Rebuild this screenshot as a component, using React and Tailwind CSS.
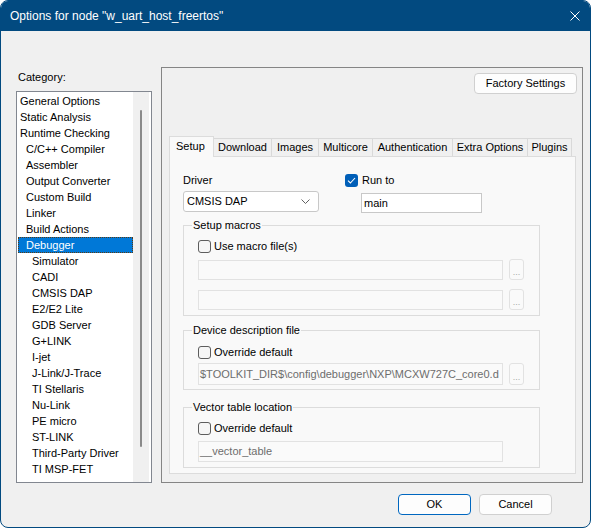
import React from "react";

const categories = [
  ["General Options", 0],
  ["Static Analysis", 0],
  ["Runtime Checking", 0],
  ["C/C++ Compiler", 1],
  ["Assembler", 1],
  ["Output Converter", 1],
  ["Custom Build", 1],
  ["Linker", 1],
  ["Build Actions", 1],
  ["Debugger", 1],
  ["Simulator", 2],
  ["CADI", 2],
  ["CMSIS DAP", 2],
  ["E2/E2 Lite", 2],
  ["GDB Server", 2],
  ["G+LINK", 2],
  ["I-jet", 2],
  ["J-Link/J-Trace", 2],
  ["TI Stellaris", 2],
  ["Nu-Link", 2],
  ["PE micro", 2],
  ["ST-LINK", 2],
  ["Third-Party Driver", 2],
  ["TI MSP-FET", 2],
];

const indent = ["pl-[1px]", "pl-[7px]", "pl-[13px]"];

const tabs = [
  ["Setup", "w-[45px]"],
  ["Download", "w-[58px]"],
  ["Images", "w-[47px]"],
  ["Multicore", "w-[54px]"],
  ["Authentication", "w-[80px]"],
  ["Extra Options", "w-[75px]"],
  ["Plugins", "w-[44px]"],
];

function Checkbox({ checked }) {
  if (checked) {
    return (
      <span className="w-[13px] h-[13px] rounded-[3px] bg-[#005fb8] flex items-center justify-center shrink-0">
        <svg width="9" height="7" viewBox="0 0 9 7">
          <path d="M1 3.6 L3.4 6 L8 1" fill="none" stroke="white" strokeWidth="1.1" />
        </svg>
      </span>
    );
  }
  return <span className="w-[13px] h-[13px] rounded-[3px] border border-[#5d5d5d] bg-[#f6f6f6] shrink-0" />;
}

function Field({ text, h = "h-[20px]" }) {
  return (
    <div className={`w-[305px] ${h} border border-[#e2e2e2] bg-[#fafafa] text-[#6d6d6d] flex items-center pl-[1px] overflow-hidden whitespace-nowrap`}>
      {text}
    </div>
  );
}

function Dots({ h = "h-[21px]" }) {
  return (
    <div className={`ml-[6px] w-[15px] ${h} rounded-[3px] border border-[#e2e2e2] bg-[#fafafa] text-[#a8a8a8] text-[9px] flex items-end justify-center pb-[2px] leading-none`}>
      ...
    </div>
  );
}

// group box: fieldset gives the legend cut into the top border
function Group({ label, children, className }) {
  return (
    <fieldset className={`ml-[13px] w-[357px] border border-[#dcdcdc] ${className}`}>
      <legend className="ml-[8px] px-[1px] leading-[16px]">{label}</legend>
      <div className="pl-[14px]">{children}</div>
    </fieldset>
  );
}

export default function App() {
  return (
    <div className="w-[591px] h-[528px] bg-white">
      <div className="w-[591px] h-[528px] flex flex-col rounded-[8px] overflow-hidden border border-[#024a80] bg-[#f0f0f0] text-[11px] text-black font-['Liberation_Sans',Arial,sans-serif]">
        <div className="h-[30px] shrink-0 bg-[#024a80] flex items-center justify-between pl-[9px] pr-[10px] text-white text-[12px]">
          <span>Options for node "w_uart_host_freertos"</span>
          <svg width="10" height="10" viewBox="0 0 10 10">
            <path d="M0.5 0.5 L9.5 9.5 M9.5 0.5 L0.5 9.5" stroke="white" strokeWidth="1" />
          </svg>
        </div>

        <div className="flex">
          <div className="ml-[15px] w-[136px]">
            <div className="mt-[38px] pl-[2px] leading-[16px]">Category:</div>
            <div className="mt-[6px] h-[392px] border border-[#828790] bg-white flex">
              <div className="w-[116px] pl-[1px] pt-[1px]">
                {categories.map(([name, level]) => {
                  const sel = name === "Debugger";
                  return (
                    <div
                      key={name}
                      className={`h-[16px] leading-[14px] border whitespace-nowrap ${indent[level]} ${
                        sel ? "bg-[#0078d7] text-white border-dotted border-[#5a3a12]" : "border-transparent"
                      }`}
                    >
                      {name}
                    </div>
                  );
                })}
              </div>
              <div className="w-[16px] mr-[2px] bg-[#f0f0f0]">
                <div className="mt-[18px] ml-[7px] w-[2px] h-[337px] rounded-full bg-[#8a8a8a]" />
              </div>
            </div>
          </div>

          <div className="ml-[9px] mt-[36px] w-[422px] h-[416px] border border-[#858585] flex flex-col">
            <div className="flex justify-end pt-[5px] pr-[5px]">
              <div className="w-[103px] h-[21px] rounded-[4px] border border-[#d0d0d0] bg-[#fdfdfd] flex items-center justify-center">
                Factory Settings
              </div>
            </div>

            <div className="mt-[42px] ml-[7px] flex items-end h-[20px]">
              {tabs.map(([name, w], i) =>
                i === 0 ? (
                  <div
                    key={name}
                    className={`${w} h-[21px] -mb-px relative z-10 bg-[#f9f9f9] border-x border-t border-[#dcdcdc] flex items-center pl-[6px] pb-[2px]`}
                  >
                    {name}
                  </div>
                ) : (
                  <div
                    key={name}
                    className={`${w} h-[18px] bg-[#f0f0f0] border-t border-r border-[#d9d9d9] flex items-center justify-center`}
                  >
                    {name}
                  </div>
                )
              )}
            </div>

            <div className="ml-[7px] w-[407px] h-[318px] border border-[#dcdcdc] bg-[#f9f9f9]">
              <div className="flex">
                <div className="ml-[13px] mt-[15px] w-[136px]">
                  <div className="leading-[16px]">Driver</div>
                  <div className="mt-[3px] h-[21px] border border-[#c8c8c8] rounded-[3px] bg-white flex items-center justify-between pl-[3px] pr-[8px]">
                    <span>CMSIS DAP</span>
                    <svg width="9" height="5" viewBox="0 0 9 5">
                      <path d="M0.5 0.5 L4.5 4.5 L8.5 0.5" fill="none" stroke="#606060" strokeWidth="1" />
                    </svg>
                  </div>
                </div>
                <div className="ml-[26px] mt-[15px]">
                  <div className="h-[16px] flex items-center gap-[4px]">
                    <Checkbox checked />
                    <span>Run to</span>
                  </div>
                  <div className="ml-[16px] mt-[5px] w-[121px] h-[20px] border border-[#c8c8c8] bg-white flex items-center pl-[2px]">
                    main
                  </div>
                </div>
              </div>

              <Group label="Setup macros" className="mt-[4px] pb-[5px]">
                <div className="mt-[5px] h-[16px] flex items-center gap-[3px]">
                  <Checkbox />
                  <span>Use macro file(s)</span>
                </div>
                <div className="mt-[5px] flex items-center">
                  <Field />
                  <Dots />
                </div>
                <div className="mt-[9px] flex items-center">
                  <Field />
                  <Dots />
                </div>
              </Group>

              <Group label="Device description file" className="mt-[6px] pb-[4px]">
                <div className="mt-[6px] h-[16px] flex items-center gap-[3px]">
                  <Checkbox />
                  <span>Override default</span>
                </div>
                <div className="mt-[3px] flex items-center">
                  <Field text="$TOOLKIT_DIR$\config\debugger\NXP\MCXW727C_core0.d" h="h-[22px]" />
                  <Dots h="h-[22px]" />
                </div>
              </Group>

              <Group label="Vector table location" className="mt-[9px] pb-[5px]">
                <div className="mt-[5px] h-[16px] flex items-center gap-[3px]">
                  <Checkbox />
                  <span>Override default</span>
                </div>
                <div className="mt-[5px] flex items-center">
                  <Field text="__vector_table" h="h-[21px]" />
                </div>
              </Group>
            </div>
          </div>
        </div>

        <div className="mt-[11px] flex justify-end gap-[8px] pr-[38px]">
          <div className="w-[73px] h-[21px] rounded-[4px] border border-[#0067c0] bg-[#fdfdfd] flex items-center justify-center">
            OK
          </div>
          <div className="w-[73px] h-[21px] rounded-[4px] border border-[#d0d0d0] bg-[#fdfdfd] flex items-center justify-center">
            Cancel
          </div>
        </div>
      </div>
    </div>
  );
}
